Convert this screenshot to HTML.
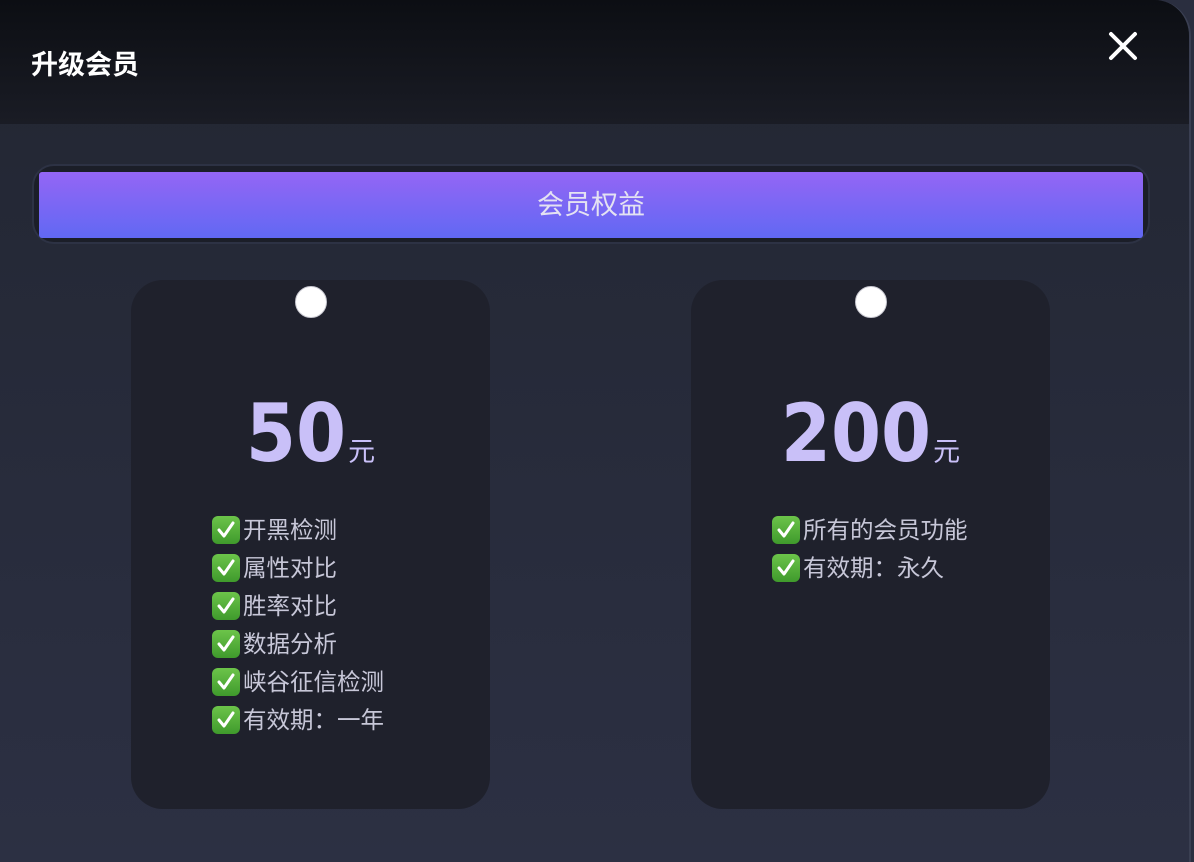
<!DOCTYPE html>
<html><head><meta charset="utf-8"><style>
*{margin:0;padding:0;box-sizing:border-box}
body{width:1194px;height:862px;background:#2a2e3f;overflow:hidden;font-family:"Liberation Sans","Noto Sans CJK SC",sans-serif;position:relative}
.win{position:absolute;left:0;top:0;width:1191px;height:862px;border-top-right-radius:36px;border-right:2px solid #3a3f52;background:linear-gradient(#222632,#2c3043);overflow:hidden}
.hdr{position:absolute;left:0;top:0;width:100%;height:124px;background:linear-gradient(#0c0e13,#1a1c25)}
.title{position:absolute;left:31px;top:43px;color:#fff;font-size:27px;font-weight:bold}
.x{position:absolute;left:1108px;top:31px;width:30px;height:30px}
.tabs{position:absolute;left:32px;top:164px;width:1118px;height:80px;border-radius:22px;border:2px solid #2d3244;background:#1b1e28}
.btn{position:absolute;left:39px;top:172px;width:1104px;height:66px;border-radius:3px;background:linear-gradient(#9466f5,#6168f3);color:#e4e2f2;font-size:27px;text-align:center;line-height:66px}
.card{position:absolute;top:280px;width:359px;height:529px;border-radius:32px;background:#1f212c}
.dot{position:absolute;left:164px;top:6px;width:32px;height:32px;border-radius:50%;background:#fff;border:1px solid #c8c8d0}
.price{position:absolute;text-align:center;color:#c9c0f8;white-space:nowrap}
.price b{font-family:"DejaVu Sans Condensed","DejaVu Sans",sans-serif;font-size:80px;font-weight:bold;letter-spacing:0px}
.price span{font-size:27px;margin-left:2px}
ul{position:absolute;list-style:none;color:#c7c7d8;font-size:23.5px}
li{height:38px;line-height:38px;display:flex;align-items:center}
.ck{width:28px;height:28px;border-radius:6px;background:linear-gradient(#6cc44a,#3f9a2c);margin-right:3px;display:inline-block;position:relative;flex:none}
.ck svg{position:absolute;left:3px;top:3px}
</style></head><body>
<div class="win">
<div class="hdr"></div>
<div class="title">升级会员</div>
<svg class="x" viewBox="0 0 30 30"><path d="M3 3L27 27M27 3L3 27" stroke="#fff" stroke-width="4" stroke-linecap="round"/></svg>
<div class="tabs"></div>
<div class="btn">会员权益</div>
<div class="card" style="left:131px"><div class="dot"></div></div>
<div class="card" style="left:691px"><div class="dot"></div></div>
<div class="price" style="left:131px;width:359px;top:387px"><b>50</b><span>元</span></div>
<div class="price" style="left:691px;width:359px;top:387px"><b>200</b><span>元</span></div>
<ul style="left:212px;top:511px">
<li><i class="ck"><svg width="22" height="22" viewBox="0 0 22 22"><path d="M4 11l5 6L18 4" stroke="#fff" stroke-width="3" fill="none" stroke-linecap="round" stroke-linejoin="round"/></svg></i>开黑检测</li>
<li><i class="ck"><svg width="22" height="22" viewBox="0 0 22 22"><path d="M4 11l5 6L18 4" stroke="#fff" stroke-width="3" fill="none" stroke-linecap="round" stroke-linejoin="round"/></svg></i>属性对比</li>
<li><i class="ck"><svg width="22" height="22" viewBox="0 0 22 22"><path d="M4 11l5 6L18 4" stroke="#fff" stroke-width="3" fill="none" stroke-linecap="round" stroke-linejoin="round"/></svg></i>胜率对比</li>
<li><i class="ck"><svg width="22" height="22" viewBox="0 0 22 22"><path d="M4 11l5 6L18 4" stroke="#fff" stroke-width="3" fill="none" stroke-linecap="round" stroke-linejoin="round"/></svg></i>数据分析</li>
<li><i class="ck"><svg width="22" height="22" viewBox="0 0 22 22"><path d="M4 11l5 6L18 4" stroke="#fff" stroke-width="3" fill="none" stroke-linecap="round" stroke-linejoin="round"/></svg></i>峡谷征信检测</li>
<li><i class="ck"><svg width="22" height="22" viewBox="0 0 22 22"><path d="M4 11l5 6L18 4" stroke="#fff" stroke-width="3" fill="none" stroke-linecap="round" stroke-linejoin="round"/></svg></i>有效期：一年</li>
</ul>
<ul style="left:772px;top:511px">
<li><i class="ck"><svg width="22" height="22" viewBox="0 0 22 22"><path d="M4 11l5 6L18 4" stroke="#fff" stroke-width="3" fill="none" stroke-linecap="round" stroke-linejoin="round"/></svg></i>所有的会员功能</li>
<li><i class="ck"><svg width="22" height="22" viewBox="0 0 22 22"><path d="M4 11l5 6L18 4" stroke="#fff" stroke-width="3" fill="none" stroke-linecap="round" stroke-linejoin="round"/></svg></i>有效期：永久</li>
</ul>
</div>
</body></html>
